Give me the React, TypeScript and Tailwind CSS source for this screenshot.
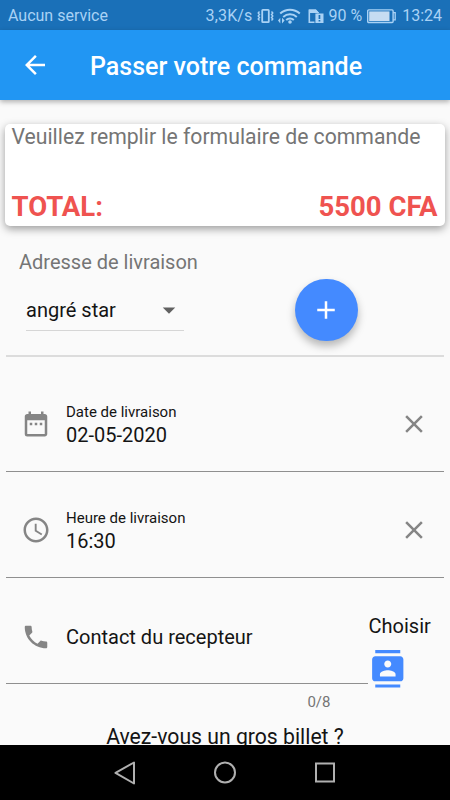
import type { ReactNode } from 'react';
import {
  MdAccessTime,
  MdAdd,
  MdArrowBack,
  MdArrowDropDown,
  MdClose,
  MdContacts,
  MdDateRange,
  MdPhone,
} from 'react-icons/md';

interface PickerFieldProps {
  icon: ReactNode;
  label: string;
  value: string;
}

const VibrateIcon = () => (
  <svg width="17" height="16" viewBox="0 0 17 16" fill="none" stroke="currentColor" strokeWidth="1.8">
    <rect x="5.2" y="1.8" width="6.6" height="12.4" rx="0.6" />
    <path d="M2.5 3.5 1.2 5l1.3 1.5L1.2 8l1.3 1.5L1.2 11l1.3 1.5M14.5 3.5 15.8 5l-1.3 1.5L15.8 8l-1.3 1.5 1.3 1.5-1.3 1.5" strokeWidth="1.4" />
  </svg>
);

const WifiIcon = () => (
  <svg width="23" height="16" viewBox="0 0 23 16" fill="none" stroke="currentColor" strokeWidth="2">
    <path d="M2.2 5.6a14.5 14.5 0 0 1 19.6 0M5.2 8.9a10.2 10.2 0 0 1 13.6 0M8.2 12a5.8 5.8 0 0 1 7.6 0" />
    <circle cx="12" cy="14" r="1.8" fill="currentColor" stroke="none" />
    <path d="M0 12.6 2.3 9.8v5.6zM6.6 12.6 4 9.8v5.6z" fill="currentColor" stroke="none" />
  </svg>
);

const SimAlertIcon = () => (
  <svg width="16" height="16" viewBox="0 0 16 16" fill="none">
    <path d="M6.5 14.2H1.3V2.2h6.2l3 3" stroke="currentColor" strokeWidth="1.6" />
    <path d="M1 1.5h7l3 3.6H1z" fill="currentColor" />
    <path d="M7.4 5.5h8.1V15H7.4z" fill="currentColor" />
    <path d="M10.6 7h1.7v4h-1.7zM10.6 12h1.7v1.6h-1.7z" fill="#1a70b8" />
  </svg>
);

const BatteryIcon = () => (
  <svg width="29" height="15" viewBox="0 0 29 15">
    <rect x="0.7" y="0.9" width="25.4" height="12.6" rx="1" fill="none" stroke="currentColor" strokeWidth="1.4" />
    <path d="M2.2 2.4h20.3V12H2.2z" fill="#c6dcf2" />
    <path d="M26 3.6h2.2v7.2H26" fill="none" stroke="currentColor" strokeWidth="1.3" />
  </svg>
);

const StatusBar = () => (
  <div className="flex h-[30px] items-center bg-[#1a70b8] pt-0.5 pr-2 pl-2 text-[16px] leading-7 text-[#a9d2f5]">
    <span className="flex-1">Aucun service</span>
    <span className="mr-[5px] tracking-[0.15px]">3,3K/s</span>
    <VibrateIcon />
    <span className="ml-[4px]"><WifiIcon /></span>
    <span className="mr-[4px] ml-[7px]"><SimAlertIcon /></span>
    <span className="mr-[5px]">90 %</span>
    <BatteryIcon />
    <span className="ml-[6px]">13:24</span>
  </div>
);

const AppBar = () => (
  <header className="relative flex h-[70px] items-center bg-[#2196f3] pl-5 text-white shadow-[0_2px_5px_rgba(0,0,0,0.3)]">
    <MdArrowBack size={30} />
    <h1 className="ml-10 pt-[3px] text-[25px] font-medium">Passer votre commande</h1>
  </header>
);

const OrderSummary = () => (
  <section className="mx-[5px] mt-6 flex h-[102px] flex-col justify-between rounded-[5px] bg-white pr-[7.5px] pl-[6.5px] shadow-[0_3px_8px_rgba(0,0,0,0.38)]">
    <p className="text-[21.2px] leading-[26px] text-[#757575]">
      Veuillez remplir le formulaire de commande
    </p>
    <div className="flex justify-between text-[27.5px] leading-[38px] font-bold text-[#ef5350]">
      <span>TOTAL:</span>
      <span>5500 CFA</span>
    </div>
  </section>
);

const AddressField = () => (
  <section className="mx-[6px] flex h-[131px] border-b-2 border-[#dcdcdc] pl-[13px]">
    <div className="w-[276px] pt-6">
      <p className="text-[20px] leading-6 text-[#757575]">Adresse de livraison</p>
      <div className="mt-5 ml-[7px] flex h-[37px] w-[158px] items-center justify-between border-b border-[#d6d6d6] pb-1">
        <span className="text-[20px]">angré star</span>
        <MdArrowDropDown size={30} className="text-[#616161]" />
      </div>
    </div>
    <button
      aria-label="Ajouter une adresse"
      className="mt-[52.5px] flex size-[62.5px] items-center justify-center rounded-full bg-[#448aff] text-white shadow-[0_5px_8px_rgba(0,0,0,0.28)]"
    >
      <MdAdd size={30} />
    </button>
  </section>
);

const PickerField = ({ icon, label, value }: PickerFieldProps) => (
  <div className="mx-[6px] flex h-[106px] items-center border-b border-[#8f8f8f] pt-[11px] pr-[15px] pl-[15px]">
    <span className="text-[#858585]">{icon}</span>
    <div className="ml-[15px] flex-1 pb-px">
      <p className="text-[15px] leading-[22px]">{label}</p>
      <p className="text-[20px] leading-6">{value}</p>
    </div>
    <MdClose size={30} className="text-[#858585]" />
  </div>
);

const ContactField = () => (
  <div className="mx-[6px] flex">
    <div className="w-[362px]">
      <div className="flex h-[106px] items-center border-b border-[#8f8f8f] pt-[12px] pl-[15px]">
        <MdPhone size={30} className="text-[#858585]" />
        <span className="ml-[15px] text-[20px]">Contact du recepteur</span>
      </div>
      <p className="mt-[8px] pr-[37.5px] text-right text-[15px] leading-5 text-[#757575]">0/8</p>
    </div>
    <div className="pt-9 pl-[0.5px]">
      <p className="text-[20px] leading-6">Choisir</p>
      <MdContacts size={37.5} className="mt-[12px] text-[#448aff]" />
    </div>
  </div>
);

const NavigationBar = () => (
  <nav className="h-[55px] bg-black">
    <svg width="450" height="55" viewBox="0 0 450 55" fill="none" stroke="#b0b0b0" strokeWidth="2">
      <path d="M134 17.5v21L115.5 27.8z" strokeLinejoin="round" />
      <circle cx="225" cy="27.5" r="10" />
      <rect x="316" y="18.5" width="18" height="18" />
    </svg>
  </nav>
);

const App = () => (
  <div className="flex h-[800px] w-[450px] flex-col overflow-hidden bg-[#fafafa] font-['Roboto',sans-serif] text-[#141414]">
    <StatusBar />
    <AppBar />
    <main className="h-[645px] overflow-hidden">
      <OrderSummary />
      <AddressField />
      <div className="mt-[9px]">
        <PickerField icon={<MdDateRange size={30} />} label="Date de livraison" value="02-05-2020" />
        <PickerField icon={<MdAccessTime size={30} />} label="Heure de livraison" value="16:30" />
        <ContactField />
      </div>
      <p className="mt-[13px] text-center text-[21.2px] leading-6">Avez-vous un gros billet ?</p>
    </main>
    <NavigationBar />
  </div>
);

export default App;
